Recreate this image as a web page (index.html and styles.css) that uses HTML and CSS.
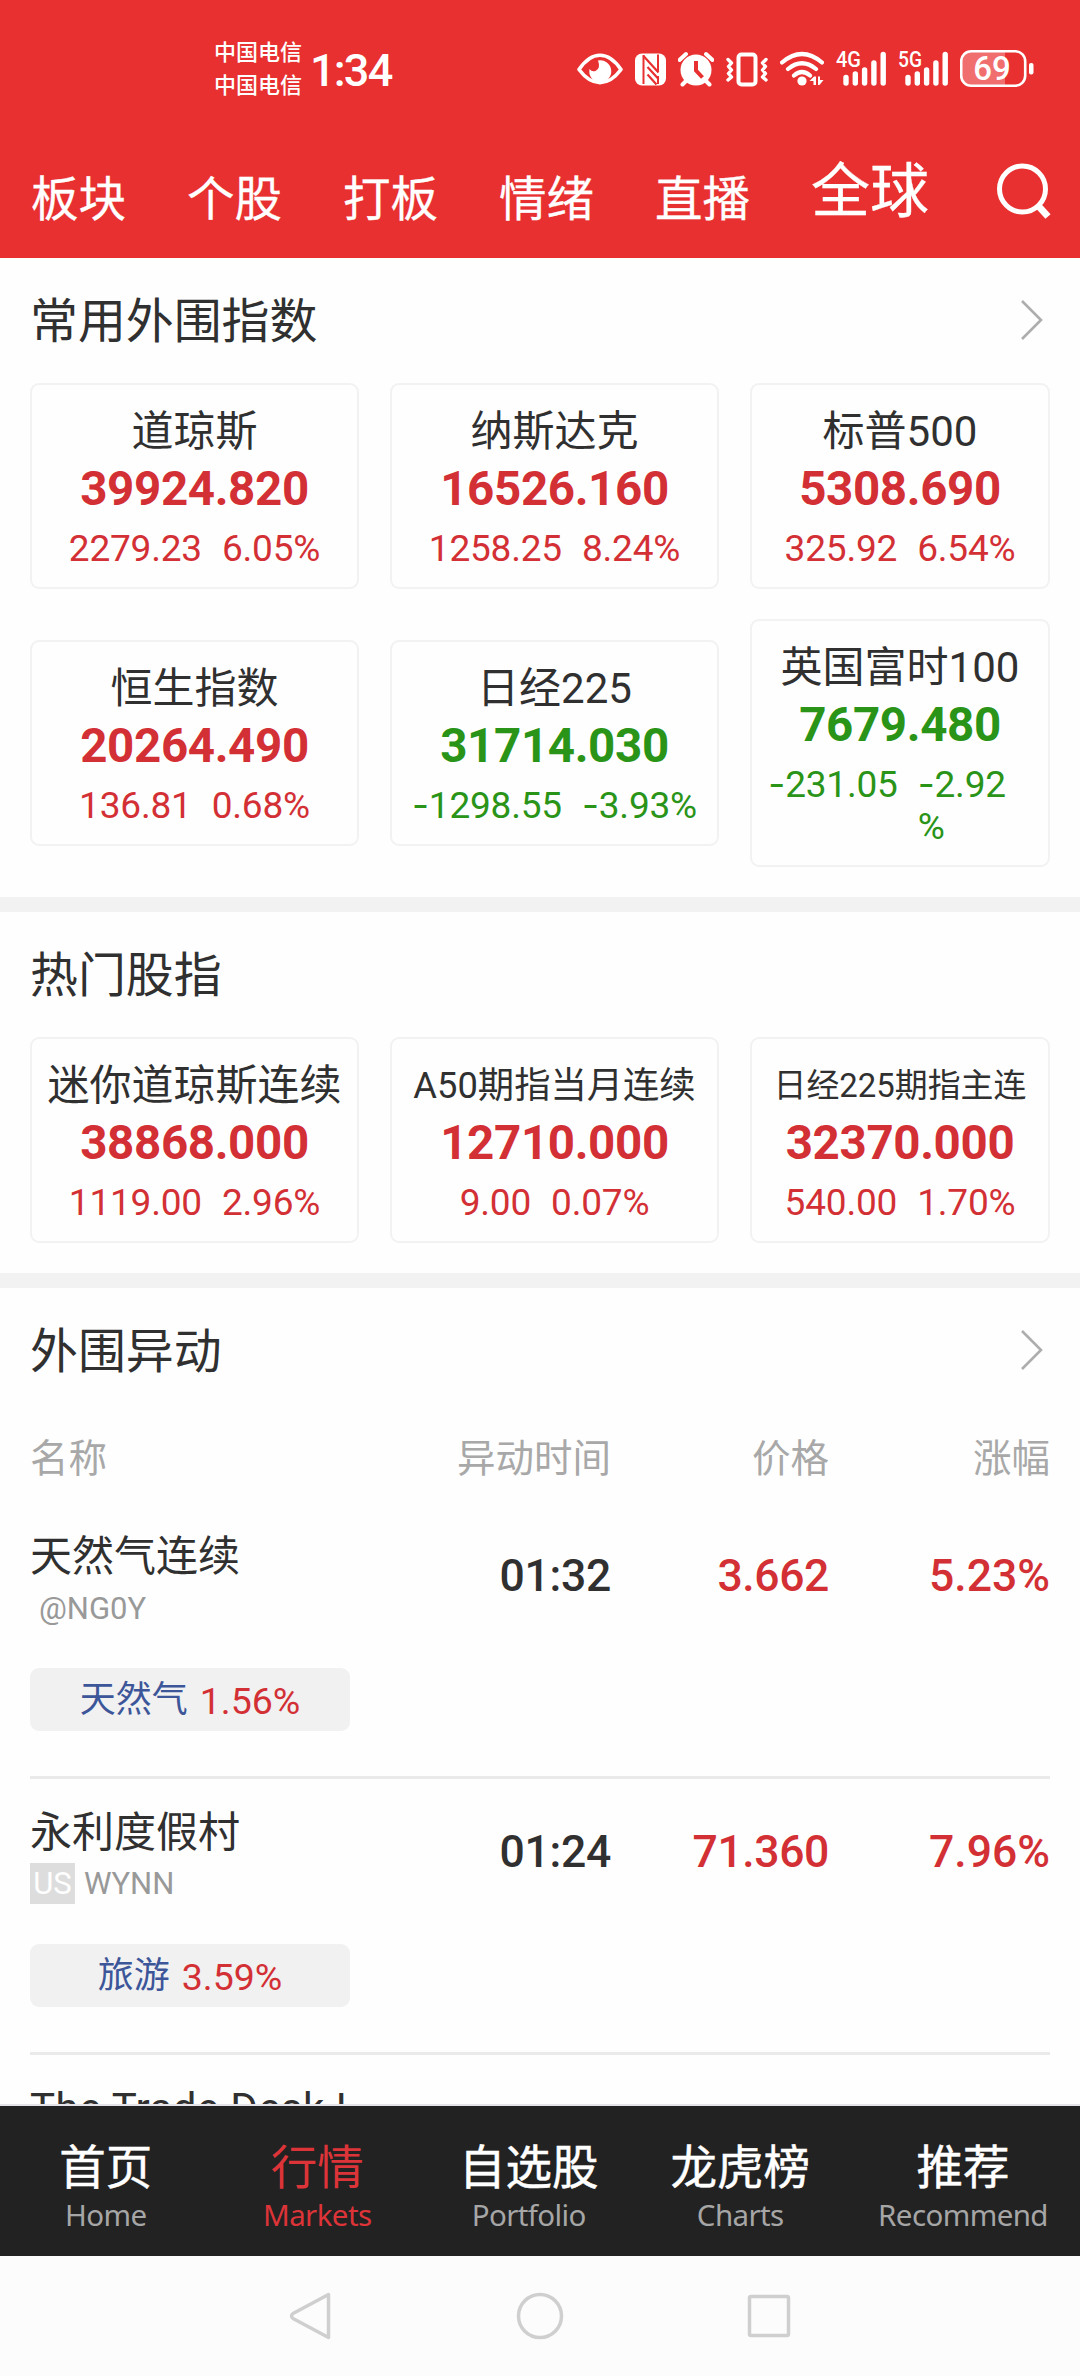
FILE: index.html
```html
<!DOCTYPE html>
<html lang="zh-CN">
<head>
<meta charset="utf-8">
<title>全球行情</title>
<link rel="stylesheet" href="styles.css">
</head>
<body>
<header class="top">
  <div class="status">
    <div class="carriers"><span>中国电信</span><span>中国电信</span></div>
    <div class="clock">1:34</div>
    <div class="status-icons">
      <svg width="46" height="56" viewBox="577 41 46 56"><path d="M579 69.500C592 50.500 608 50.500 621 69.500C608 87 592 87 579 69.500Z" fill="none" stroke="#fff" stroke-width="3.600" stroke-linejoin="round"/><path d="M598 60.500A11 11 0 1 1 589.500 69Q591.500 72 595.500 71Q601 68.500 598 60.500Z" fill="#fff"/></svg>
      <svg width="31" height="56" viewBox="635 41 31 56"><rect x="635" y="53.500" width="31" height="32" rx="7" fill="#fff"/><path d="M643.500 55V84M658 54.500V71.500M658 76V84" stroke="#e83030" stroke-width="2"/><path d="M643.500 56L658.500 72.500M647.500 67L658.500 79M647.500 74.500L656.500 84.500" stroke="#e83030" stroke-width="2.200"/></svg>
      <svg width="36" height="56" viewBox="678 41 36 56"><circle cx="696" cy="70" r="15.500" fill="#fff"/><path d="M679.500 60L686 54M712.500 60L706 54M686 81L682.500 84.500M706 81L709.500 84.500" stroke="#fff" stroke-width="4" stroke-linecap="round"/><path d="M696 61V70.500L702.500 77.500" fill="none" stroke="#e83030" stroke-width="4"/></svg>
      <svg width="42" height="56" viewBox="726 41 42 56" fill="none" stroke="#fff" stroke-linejoin="round" stroke-linecap="round"><rect x="738.500" y="54.500" width="17" height="30" rx="3" stroke-width="4"/><path d="M728 59.500L731.500 63L728.500 66.500L731.500 70L728.500 73.500L731.500 77L728 80M766 59.500L762.500 63L765.500 66.500L762.500 70L765.500 73.500L762.500 77L766 80" stroke-width="3.400"/></svg>
      <svg width="44" height="56" viewBox="780 41 44 56"><path d="M782 62.500Q802 45.500 822 62.500M788 69Q802 57.500 816 69M794 75.500Q802 68.500 810 75.500" fill="none" stroke="#fff" stroke-width="4.200" stroke-linecap="round"/><circle cx="802" cy="81" r="4.600" fill="#fff"/><path d="M809.500 81L814 76.500H816V85H813.500V81ZM818 76.500H820V80L823.500 80L819.500 85H818Z" fill="#fff"/></svg>
      <svg width="50" height="56" viewBox="836 41 50 56"><g class="bars"><path d="M846 77.500V83M855.300 74V83M864.600 70V83M873.900 63V83M883.200 54.500V83"/></g><text x="836" y="67" textLength="25" lengthAdjust="spacingAndGlyphs" class="net">4G</text></svg>
      <svg width="50" height="56" viewBox="898 41 50 56"><g class="bars"><path d="M908 77.500V83M917.300 74V83M926.600 70V83M935.900 63V83M945.200 54.500V83"/></g><text x="898" y="67" textLength="24" lengthAdjust="spacingAndGlyphs" class="net">5G</text></svg>
      <svg width="74" height="56" viewBox="960 41 74 56"><path d="M1005 52H971Q962 52 962 61V76Q962 85 971 85H1005Z" fill="#f06e6e"/><rect x="961.200" y="51.200" width="64" height="34.600" rx="10" fill="none" stroke="#fff" stroke-width="2.600"/><rect x="1029" y="63" width="4.500" height="11.500" rx="2" fill="#fff"/><text x="992" y="80" text-anchor="middle" class="level">69</text></svg>
    </div>
  </div>
  <nav class="tabs">
    <a>板块</a><a>个股</a><a>打板</a><a>情绪</a><a>直播</a><a class="active">全球</a>
    <svg class="search" width="56" height="58" viewBox="0 0 56 58" fill="none" stroke="#fff" stroke-width="5"><circle cx="26.500" cy="27" r="23"/><path d="M41.500 43L52 54.500" stroke-width="7"/></svg>
  </nav>
</header>

<main class="content">
  <section class="panel">
    <div class="panel-head"><h2>常用外围指数</h2><svg class="more" width="24" height="42" viewBox="0 0 24 42"><path d="M2 2L21 21L2 40"/></svg></div>
    <div class="cards">
      <div class="card up"><h3>道琼斯</h3><b>39924.820</b><p><span>2279.23</span><span>6.05%</span></p></div>
      <div class="card up"><h3>纳斯达克</h3><b>16526.160</b><p><span>1258.25</span><span>8.24%</span></p></div>
      <div class="card up"><h3>标普500</h3><b>5308.690</b><p><span>325.92</span><span>6.54%</span></p></div>
      <div class="card up"><h3>恒生指数</h3><b>20264.490</b><p><span>136.81</span><span>0.68%</span></p></div>
      <div class="card down"><h3>日经225</h3><b>31714.030</b><p><span><i>-</i>1298.55</span><span><i>-</i>3.93%</span></p></div>
      <div class="card down"><h3>英国富时100</h3><b>7679.480</b><p><span><i>-</i>231.05</span><span class="wrap"><i>-</i>2.92<br>%</span></p></div>
    </div>
  </section>
  <section class="panel">
    <div class="panel-head"><h2>热门股指</h2></div>
    <div class="cards">
      <div class="card up"><h3>迷你道琼斯连续</h3><b>38868.000</b><p><span>1119.00</span><span>2.96%</span></p></div>
      <div class="card up"><h3 class="mid">A50期指当月连续</h3><b>12710.000</b><p><span>9.00</span><span>0.07%</span></p></div>
      <div class="card up"><h3 class="small">日经225期指主连</h3><b>32370.000</b><p><span>540.00</span><span>1.70%</span></p></div>
    </div>
  </section>
  <section class="panel moves">
    <div class="panel-head"><h2>外围异动</h2><svg class="more" width="24" height="42" viewBox="0 0 24 42"><path d="M2 2L21 21L2 40"/></svg></div>
    <div class="cols labels"><span>名称</span><span>异动时间</span><span>价格</span><span>涨幅</span></div>
    <article class="move">
      <div class="cols">
        <div class="stock"><h3>天然气连续</h3><p class="code futures">@NG0Y</p></div>
        <span class="time">01:32</span><span class="val">3.662</span><span class="val">5.23%</span>
      </div>
      <div class="chip"><span>天然气</span><em>1.56%</em></div>
    </article>
    <article class="move">
      <div class="cols">
        <div class="stock"><h3>永利度假村</h3><p class="code"><span class="market">US</span>WYNN</p></div>
        <span class="time">01:24</span><span class="val">71.360</span><span class="val">7.96%</span>
      </div>
      <div class="chip"><span>旅游</span><em>3.59%</em></div>
    </article>
    <article class="move">
      <div class="cols"><div class="stock"><h3 class="latin">The Trade Desk I</h3></div></div>
    </article>
  </section>
</main>

<nav class="tabbar">
  <a><span>首页</span><small>Home</small></a>
  <a class="active"><span>行情</span><small>Markets</small></a>
  <a><span>自选股</span><small>Portfolio</small></a>
  <a><span>龙虎榜</span><small>Charts</small></a>
  <a><span>推荐</span><small>Recommend</small></a>
</nav>
<footer class="sysnav">
  <svg width="46" height="50" viewBox="0 0 46 50"><path d="M40.500 3.500V46.500L5 27.500Q2 25 5 22.500Z"/></svg>
  <svg width="50" height="50" viewBox="0 0 50 50"><circle cx="25" cy="25" r="21.500"/></svg>
  <svg width="46" height="50" viewBox="0 0 46 50"><rect x="3.500" y="5.500" width="39" height="39" rx="1.500"/></svg>
</footer>
</body>
</html>
```

FILE: styles.css
```css
* { box-sizing: border-box; margin: 0; padding: 0; }
body {
  width: 1080px;
  height: 2376px;
  display: flex;
  flex-direction: column;
  overflow: hidden;
  background: #fefefe;
  color: #303030;
  font-family: Roboto, "Noto Sans CJK SC", sans-serif;
}
h2, h3 { font-weight: 400; white-space: nowrap; }
svg { display: block; flex: none; }

/* header */
.top { height: 258px; flex: none; background: #e83030; color: #fff; }
.status { height: 138px; padding: 0 46px 0 214px; display: flex; align-items: center; }
.carriers { display: flex; flex-direction: column; font-size: 22px; line-height: 33px; font-weight: 500; }
.clock { margin-left: 8px; padding-top: 2px; font-size: 45px; font-weight: 500; letter-spacing: -1.800px; }
.status-icons { margin-left: auto; display: flex; gap: 12px; }
.bars { fill: none; stroke: #fff; stroke-width: 5.400; stroke-linecap: round; }
.net { font-size: 22px; font-weight: 500; fill: #fff; }
.level { font-size: 33px; font-weight: 500; fill: #fff; }
.tabs { height: 120px; padding: 0 28px 0 31px; display: flex; align-items: flex-start; gap: 61px; font-size: 47.500px; line-height: 60px; white-space: nowrap; -webkit-text-stroke: .3px; }
.tabs a { padding-top: 32px; }
.tabs .active { font-size: 59px; padding-top: 24px; }
.search { margin: 24px 0 0 auto; }

/* content */
.content { flex: 1; min-height: 0; overflow: hidden; border-bottom: 2px solid #e4e4e8; }
.panel { padding: 0 30px 30px; border-bottom: 15px solid #f2f2f2; }
.moves { border: 0; padding-bottom: 0; }
.panel-head { height: 125px; display: flex; align-items: center; justify-content: space-between; padding: 3px 6px 0 0; }
.panel-head h2 { font-size: 47.900px; line-height: 60px; }
.more { margin-top: -4px; }
.more path { fill: none; stroke: #adadad; stroke-width: 2.600; }
.cards { display: grid; grid-template-columns: 329px 329px 300px; column-gap: 31px; row-gap: 30px; align-items: center; }
.card { border: 2px solid #f2f2f2; border-radius: 9px; padding: 22px 14px 17px; text-align: center; }
.card h3 { font-size: 42px; line-height: 50px; margin: 0 -10px; color: #303030; }
.card .mid { font-size: 36.300px; }
.card .small { font-size: 32.900px; }
.card b { display: block; margin-top: 4px; font-size: 47.500px; line-height: 56px; letter-spacing: -.350px; }
.card p { margin-top: 11px; display: flex; justify-content: center; gap: 20px; font-size: 37px; line-height: 42px; letter-spacing: -.200px; white-space: nowrap; }
.card i { font-family: Inter, sans-serif; font-style: normal; line-height: 1; }
.card .wrap { width: 114px; text-align: left; }
.up { color: #d33035; }
.down { color: #2a9418; }

/* movers list */
.cols { display: grid; grid-template-columns: 380px 201px 218px 1fr; text-align: right; }
.cols > :first-child { text-align: left; }
.labels { height: 90px; font-size: 38.500px; line-height: 92px; color: #a8a8a8; }
.move { border-bottom: 3px solid #eaeaea; height: 276px; padding-top: 26px; }
.stock h3 { font-size: 42px; line-height: 56px; }
.stock .latin { letter-spacing: .400px; }
.code { display: flex; align-items: center; height: 41px; margin-top: 2px; font-size: 31px; color: #999; }
.futures { padding: 2px 0 0 9px; }
.market { width: 45px; line-height: 41px; margin-right: 9px; text-align: center; background: #ddd; color: #fff; }
.time, .val { font-size: 44.500px; font-weight: 500; line-height: 50px; padding-top: 22px; }
.time { letter-spacing: -.300px; }
.val { color: #d33035; letter-spacing: -.400px; }
.val:last-child { letter-spacing: 0; }
.chip { width: 320px; height: 63px; margin-top: 40px; border-radius: 9px; background: #f1f1f1; display: flex; align-items: center; justify-content: center; gap: 12px; font-size: 36px; line-height: 60px; color: #3c5699; }
.chip em { margin-top: 2px; font-style: normal; font-size: 37.500px; color: #d33035; }

/* bottom bars */
.tabbar { height: 150px; flex: none; background: #222; color: #fff; display: grid; grid-template-columns: repeat(4, 211.500px) 1fr; padding-top: 33px; text-align: center; }
.tabbar a { display: flex; flex-direction: column; }
.tabbar span { font-size: 46.500px; line-height: 59px; -webkit-text-stroke: .500px; }
.tabbar small { font: 29.500px/34px "Noto Sans", sans-serif; letter-spacing: -.600px; color: #a6a6a6; }
.tabbar .active, .tabbar .active small { color: #dc3438; }
.tabbar .active span { -webkit-text-stroke: 0; }
.sysnav { height: 120px; flex: none; background: #fcfcfc; display: flex; align-items: center; justify-content: center; gap: 181px; }
.sysnav svg { fill: none; stroke: #cfcfcf; stroke-width: 3.500; stroke-linejoin: round; }
```
